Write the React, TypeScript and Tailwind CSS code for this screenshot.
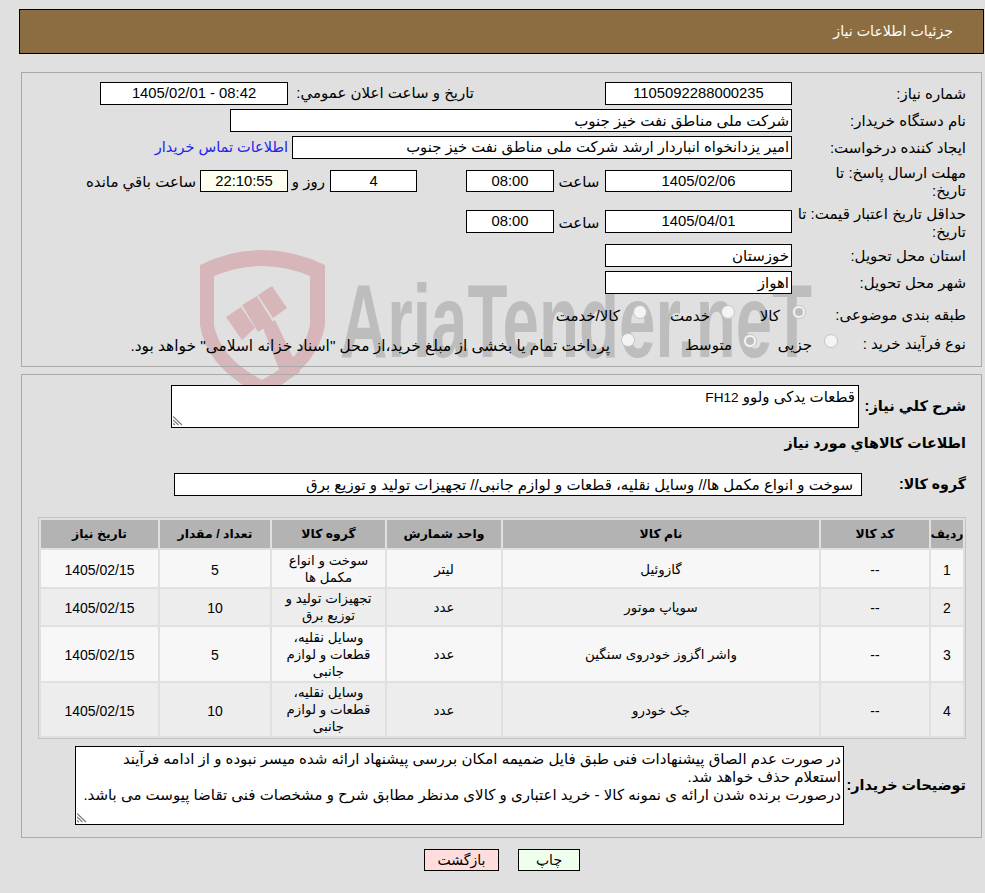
import type { ReactNode } from "react";

const box = "border border-black bg-white h-[23px] leading-[21px] shrink-0 whitespace-nowrap";
const num = "text-[14.8px] text-center";

function Shield() {
  return (
    <svg viewBox="200 250 126 140" className="absolute left-[200px] top-[250px] w-[126px] h-[140px]" aria-hidden="true">
      <path
        fill="#d6b6b8"
        fillRule="evenodd"
        d="M200 265 Q262 235 325 265 L325 325 Q318 368 262 396 Q206 368 200 325 Z M214 276 L214 325 Q220 358 262 380 Q304 358 310 325 L310 276 Q262 256 214 276 Z"
      />
      <path
        fill="#d6b6b8"
        d="M226 317 L241 307 L255 328 L242 340 Z M242 305 L257 296 L273 322 L258 332 Z M258 295 L272 286 L287 308 L273 318 Z M263 328 L275 320 L300 372 L284 382 Z"
      />
    </svg>
  );
}

function Grip() {
  return (
    <svg viewBox="0 0 10 10" className="absolute left-[1px] bottom-[1px] w-[10px] h-[10px]" aria-hidden="true">
      <path d="M0 0.5 L9 9 M0 4 L5.5 9 M0 7.5 L2 9" stroke="#777" strokeWidth="1.1" />
    </svg>
  );
}

function Label({ children, w = "w-[189px]" }: { children: ReactNode; w?: string }) {
  return <div className={`${w} shrink-0 pr-[15px] leading-[18px] whitespace-nowrap`}>{children}</div>;
}

function Radio({ checked }: { checked?: boolean }) {
  return (
    <span className="w-[14px] h-[14px] rounded-full border border-[#c4c4c4] bg-[#f4f4f4] flex items-center justify-center shrink-0 -mt-[4px]">
      {checked && <span className="w-[8px] h-[8px] rounded-full bg-[#bdbdbd]" />}
    </span>
  );
}

const rows = [
  { n: "1", name: "گازوئیل", unit: "لیتر", group: ["سوخت و انواع", "مکمل ها"], qty: "5", h: "h-[37px]", bg: "bg-[#f7f7f7]" },
  { n: "2", name: "سوپاپ موتور", unit: "عدد", group: ["تجهیزات تولید و", "توزیع برق"], qty: "10", h: "h-[36px]", bg: "bg-[#ededed]" },
  { n: "3", name: "واشر اگزوز خودروی سنگین", unit: "عدد", group: ["وسایل نقلیه،", "قطعات و لوازم", "جانبی"], qty: "5", h: "h-[54px]", bg: "bg-[#f7f7f7]" },
  { n: "4", name: "جک خودرو", unit: "عدد", group: ["وسایل نقلیه،", "قطعات و لوازم", "جانبی"], qty: "10", h: "h-[53px]", bg: "bg-[#ededed]" },
];

const cols = "grid grid-cols-[32px_108px_316px_114px_113px_110px_117px] gap-[2px]";
const cell = "flex items-center justify-center pt-[3px]";
const low = "translate-y-[3px]";

export default function App() {
  return (
    <div dir="rtl" className="font-['Liberation_Sans','DejaVu_Sans',sans-serif] relative w-[985px] h-[893px] bg-[#e0e0e0] text-[15px] text-black overflow-hidden pt-[9px]">
      <div className="ml-[19px] mr-[1px] h-[45px] border border-black bg-[#8c6d42] text-white text-[14.2px] flex items-center pr-[30px]">جزئیات اطلاعات نیاز</div>

      <Shield />
      <div dir="ltr" aria-hidden="true" className="absolute left-[340px] top-[266px] text-[104px] leading-[110px] font-bold text-[#bdbdbd] scale-x-[0.63] origin-left whitespace-nowrap">AriaTender.neT</div>

      <div className="relative mt-[18px] ml-[21px] mr-[3px] border border-[#a9a9a9] h-[295px] pt-[9px]">
        <div className="flex h-[27px] leading-[22px]">
          <Label><span className="leading-[24px]">شماره نیاز:</span></Label>
          <div className={`${box} ${num} w-[187px]`}>1105092288000235</div>
          <div className="mr-[131px] w-[181px] shrink-0 whitespace-nowrap">تاریخ و ساعت اعلان عمومي:</div>
          <div dir="ltr" className={`${box} ${num} w-[188px] mr-[5px]`}>1405/02/01 - 08:42</div>
        </div>
        <div className="flex h-[27px]">
          <Label><span className="leading-[24px]">نام دستگاه خریدار:</span></Label>
          <div className={`${box} w-[562px] pr-[2px]`}>شرکت ملی مناطق نفت خیز جنوب</div>
        </div>
        <div className="flex h-[34px]">
          <Label><span className="leading-[24px]">ایجاد کننده درخواست:</span></Label>
          <div className={`${box} w-[500px] pr-[2px] text-[14.8px]`}>امیر یزدانخواه انباردار ارشد شرکت ملی مناطق نفت خیز جنوب</div>
          <div className="mr-[4px] text-[#2222ee] text-[14.5px] leading-[22px] whitespace-nowrap">اطلاعات تماس خریدار</div>
        </div>
        <div className="flex h-[40px] leading-[24px]">
          <Label><div className="-mt-[6px]">مهلت ارسال پاسخ: تا<br />تاریخ:</div></Label>
          <div className={`${box} ${num} !h-[22px] !leading-[21px] w-[187px]`}>1405/02/06</div>
          <div className="mr-[5px] w-[42px] shrink-0 text-center">ساعت</div>
          <div className={`${box} ${num} !h-[22px] w-[88px] mr-[4px]`}>08:00</div>
          <div className={`${box} ${num} !h-[22px] w-[87px] mr-[49px]`}>4</div>
          <div className="mr-[5px] w-[28px] shrink-0 whitespace-nowrap text-center">روز و</div>
          <div className={`${box} ${num} !h-[22px] !bg-[#fffff0] w-[88px] mr-[9px]`}>22:10:55</div>
          <div className="mr-[4px] whitespace-nowrap">ساعت باقي مانده</div>
        </div>
        <div className="flex h-[34px] leading-[22px]">
          <Label><div className="-mt-[5px]">حداقل تاریخ اعتبار قیمت: تا<br />تاریخ:</div></Label>
          <div className={`${box} ${num} w-[187px]`}>1405/04/01</div>
          <div className="mr-[5px] w-[42px] shrink-0 text-center leading-[25px]">ساعت</div>
          <div className={`${box} ${num} w-[88px] mr-[4px]`}>08:00</div>
        </div>
        <div className="flex h-[27px]">
          <Label><span className="leading-[24px]">استان محل تحویل:</span></Label>
          <div className={`${box} w-[187px] pr-[2px]`}>خوزستان</div>
        </div>
        <div className="flex h-[27px]">
          <Label><span className="leading-[24px]">شهر محل تحویل:</span></Label>
          <div className={`${box} w-[187px] pr-[2px]`}>اهواز</div>
        </div>
        <div className="flex items-center h-[28px] pt-[3px]">
          <Label w="w-[175px]"><div className="translate-y-[1px]">طبقه بندی موضوعی:</div></Label>
          <div className="flex items-center gap-[12px] w-[71px] shrink-0"><Radio checked /><span className={low}>کالا</span></div>
          <div className="flex items-center gap-[11px] w-[88px] shrink-0"><Radio /><span className={low}>خدمت</span></div>
          <div className="flex items-center gap-[13px]"><Radio /><span className={low}>کالا/خدمت</span></div>
        </div>
        <div className="flex items-center h-[30px] pt-[3px]">
          <Label w="w-[143px]"><div className="translate-y-[1px]">نوع فرآیند خرید :</div></Label>
          <div className="flex items-center gap-[12px] w-[81px] shrink-0"><Radio /><span className={low}>جزیی</span></div>
          <div className="flex items-center gap-[11px] w-[122px] shrink-0"><Radio checked /><span className={low}>متوسط</span></div>
          <div className="flex items-center gap-[11px]"><Radio /><span className={`whitespace-nowrap text-[15.4px] ${low}`}>پرداخت تمام یا بخشی از مبلغ خرید،از محل "اسناد خزانه اسلامی" خواهد بود.</span></div>
        </div>
      </div>

      <div className="relative mt-[7px] ml-[21px] mr-[3px] border border-[#a9a9a9] h-[464px] pt-[10px]">
        <div className="flex">
          <div className="w-[122px] shrink-0 pr-[15px] font-bold text-[14.6px] leading-[43px] whitespace-nowrap">شرح کلي نیاز:</div>
          <div className="relative border border-black bg-white w-[688px] h-[43px] pr-[3px] leading-[22px]">
            <span>قطعات یدکی ولوو <span className="text-[13.6px]">FH12</span></span>
            <Grip />
          </div>
        </div>
        <div className="pr-[15px] font-bold text-[14.3px] h-[45px] leading-[30px]">اطلاعات کالاهاي مورد نیاز</div>
        <div className="flex">
          <div className="w-[119px] shrink-0 pr-[15px] font-bold text-[14.2px] leading-[23px] whitespace-nowrap">گروه کالا:</div>
          <div className={`${box} w-[688px] pr-[8px]`}>سوخت و انواع مکمل ها// وسایل نقلیه، قطعات و لوازم جانبی// تجهیزات تولید و توزیع برق</div>
        </div>

        <div className="border border-[#c4c4c4] p-[2px] w-[928px] mr-[15px] mt-[21px] text-[13.4px]">
          <div className={`${cols} h-[28px] font-bold text-[12.4px]`}>
            {["ردیف", "کد کالا", "نام کالا", "واحد شمارش", "گروه کالا", "تعداد / مقدار", "تاریخ نیاز"].map((t) => (
              <div key={t} className="bg-[#b3b3b3] flex items-center justify-center whitespace-nowrap">{t}</div>
            ))}
          </div>
          {rows.map((r) => (
            <div key={r.n} className={`${cols} ${r.h} mt-[2px]`}>
              <div className={`${r.bg} ${cell} text-[14px]`}>{r.n}</div>
              <div className={`${r.bg} ${cell} text-[14px]`}>--</div>
              <div className={`${r.bg} ${cell}`}>{r.name}</div>
              <div className={`${r.bg} ${cell}`}>{r.unit}</div>
              <div className={`${r.bg} flex flex-col items-center justify-center leading-[17px] whitespace-nowrap`}>
                {r.group.map((g) => <div key={g}>{g}</div>)}
              </div>
              <div className={`${r.bg} ${cell} text-[14px]`}>{r.qty}</div>
              <div className={`${r.bg} ${cell} text-[14px]`}>1405/02/15</div>
            </div>
          ))}
        </div>

        <div className="flex mt-[7px]">
          <div className="w-[137px] shrink-0 pr-[15px] font-bold text-[14.4px] leading-[79px] whitespace-nowrap">توضیحات خریدار:</div>
          <div className="relative border border-black bg-white w-[769px] h-[79px] pr-[2px] leading-[18px] pt-[3px] whitespace-nowrap">
            <div>در صورت عدم الصاق پیشنهادات فنی طبق فایل ضمیمه امکان بررسی پیشنهاد ارائه شده میسر نبوده و از ادامه فرآیند</div>
            <div>استعلام حذف خواهد شد.</div>
            <div>درصورت برنده شدن ارائه ی نمونه کالا - خرید اعتباری و کالای مدنظر مطابق شرح و مشخصات فنی تقاضا پیوست می باشد.</div>
            <Grip />
          </div>
        </div>
      </div>

      <div className="flex gap-[19px] mt-[11px] pr-[405px]">
        <button className="w-[62px] h-[22px] border border-black bg-[#eeffee] text-[14px] leading-[20px]">چاپ</button>
        <button className="w-[75px] h-[22px] border border-black bg-[#ffdddd] text-[14px] leading-[20px]">بازگشت</button>
      </div>
    </div>
  );
}
